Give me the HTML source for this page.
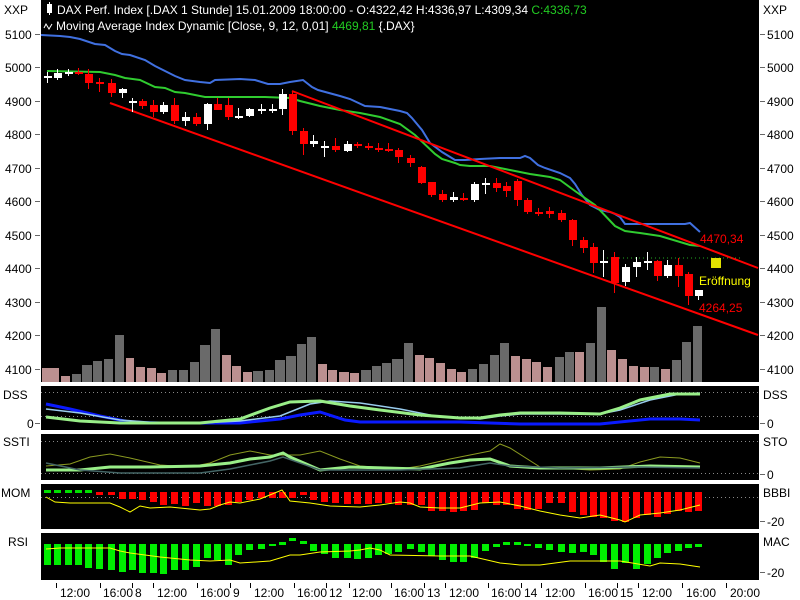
<!DOCTYPE html>
<html><head><meta charset="utf-8"><style>
html,body{margin:0;padding:0;background:#fff;width:800px;height:600px;overflow:hidden}
svg{display:block;font-family:"Liberation Sans",sans-serif}
</style></head><body>
<svg id="s" width="800" height="600" xmlns="http://www.w3.org/2000/svg">
<rect x="0" y="0" width="800" height="600" fill="#fff"/>
<rect x="41" y="0" width="718" height="382" fill="#000"/>
<rect x="41" y="386" width="718" height="44" fill="#000"/>
<rect x="41" y="434" width="718" height="46" fill="#000"/>
<rect x="41" y="484" width="718" height="45" fill="#000"/>
<rect x="41" y="533" width="718" height="47" fill="#000"/>
<g id="vol"></g>
<g id="lines"></g>
<g id="cand"></g>
<g id="ind"></g>
<rect x="47" y="4" width="5" height="9" fill="#fff"/><line x1="49.5" y1="2" x2="49.5" y2="15" stroke="#fff"/>
<text x="57" y="14" font-size="12" fill="#fff">DAX Perf. Index [.DAX  1 Stunde] 15.01.2009 18:00:00 - O:4322,42 H:4336,97 L:4309,34 <tspan fill="#22cc22">C:4336,73</tspan></text>
<path d="M44 28 L46 24 L49 29 L52 24" stroke="#fff" fill="none"/>
<text x="56" y="30" font-size="12" fill="#fff">Moving Average Index Dynamic [Close, 9, 12, 0,01] <tspan fill="#22cc22">4469,81</tspan> {.DAX}</text>
<text x="700" y="243" font-size="12" fill="#f00">4470,34</text>
<text x="699" y="285" font-size="12" fill="#ff0">Eröffnung</text>
<text x="699" y="312" font-size="12" fill="#f00">4264,25</text>
<rect x="711" y="258" width="10" height="10" fill="#e0e000"/>
<g font-size="12" fill="#000">
<text x="4" y="14">XXP</text><text x="763" y="14">XXP</text>
<text x="5" y="39">5100</text><text x="5" y="72">5000</text><text x="5" y="106">4900</text><text x="5" y="139">4800</text><text x="5" y="173">4700</text><text x="5" y="206">4600</text><text x="5" y="240">4500</text><text x="5" y="273">4400</text><text x="5" y="307">4300</text><text x="5" y="340">4200</text><text x="5" y="374">4100</text>
<text x="767" y="39">5100</text><text x="767" y="72">5000</text><text x="767" y="106">4900</text><text x="767" y="139">4800</text><text x="767" y="173">4700</text><text x="767" y="206">4600</text><text x="767" y="240">4500</text><text x="767" y="273">4400</text><text x="767" y="307">4300</text><text x="767" y="340">4200</text><text x="767" y="374">4100</text>
<text x="3" y="399">DSS</text><text x="763" y="399">DSS</text>
<text x="27" y="428">0</text><text x="767" y="428">0</text>
<text x="3" y="446">SSTI</text><text x="763" y="446">STO</text>
<text x="767" y="479">0</text>
<text x="1" y="497">MOM</text><text x="763" y="497">BBBI</text>
<text x="767" y="526">-20</text>
<text x="8" y="546">RSI</text><text x="763" y="546">MAC</text>
<text x="767" y="577">-20</text>
</g>
<g stroke="#666">
<path d="M35 34.5h5M35 67.5h5M35 101.5h5M35 134.5h5M35 168.5h5M35 201.5h5M35 235.5h5M35 268.5h5M35 302.5h5M35 335.5h5M35 369.5h5M35 423.5h5"/>
<path d="M760 34.5h5M760 67.5h5M760 101.5h5M760 134.5h5M760 168.5h5M760 201.5h5M760 235.5h5M760 268.5h5M760 302.5h5M760 335.5h5M760 369.5h5M760 423.5h5M760 474.5h5M760 521.5h5M760 572.5h5"/>
</g>
<g font-size="12" fill="#000">
<text x="60" y="597">12:00</text><text x="103" y="597">16:00</text><text x="135" y="597">8</text>
<text x="157" y="597">12:00</text><text x="200" y="597">16:00</text><text x="233" y="597">9</text>
<text x="254" y="597">12:00</text><text x="297" y="597">16:00</text><text x="329" y="597">12</text>
<text x="352" y="597">12:00</text><text x="394" y="597">16:00</text><text x="427" y="597">13</text>
<text x="449" y="597">12:00</text><text x="491" y="597">16:00</text><text x="524" y="597">14</text>
<text x="545" y="597">12:00</text><text x="588" y="597">16:00</text><text x="620" y="597">15</text>
<text x="642" y="597">12:00</text><text x="686" y="597">16:00</text><text x="730" y="597">20:00</text>
</g>
<path stroke="#000" d="M56.5 583v5M100.5 583v5M132.5 583v5M153.5 583v5M197.5 583v5M230.5 583v5M250.5 583v5M294.5 583v5M326.5 583v5M349.5 583v5M391.5 583v5M424.5 583v5M445.5 583v5M488.5 583v5M521.5 583v5M541.5 583v5M585.5 583v5M617.5 583v5M638.5 583v5M682.5 583v5M726.5 583v5"/>
</svg>
<script>
var NS="http://www.w3.org/2000/svg";
function el(p,t,a){var e=document.createElementNS(NS,t);for(var k in a)e.setAttribute(k,a[k]);document.getElementById(p).appendChild(e);return e;}
var P="#bb9090",G="#6a6a6a";
var vol=[[42,60,368,P],[61,71,376,P],[72,82,374,G],[82,93,365,G],[93,103,361,G],[104,114,359,G],[115,125,335,G],[126,135,358,P],[136,146,367,P],[147,157,368,P],[157,167,373,P],[168,178,370,G],[179,189,370,G],[190,200,362,G],[200,211,345,G],[211,221,329,G],[222,232,355,P],[232,242,366,P],[243,253,372,P],[253,264,371,G],[265,275,370,G],[275,286,360,G],[286,297,356,G],[297,307,344,G],[307,317,337,G],[318,328,364,P],[328,338,370,P],[339,350,372,P],[350,360,373,P],[361,372,370,G],[372,382,366,G],[382,392,363,G],[392,404,359,G],[404,414,343,G],[415,425,355,P],[425,435,358,P],[436,446,363,P],[447,457,369,P],[457,467,372,P],[468,478,369,G],[479,489,364,G],[490,500,355,G],[500,510,343,G],[511,521,356,P],[522,532,359,P],[532,542,362,P],[543,553,367,P],[555,565,357,G],[565,575,352,G],[575,585,352,P],[586,596,343,G],[597,607,307,G],[607,617,350,P],[618,628,359,P],[629,639,366,P],[640,650,367,P],[650,660,367,G],[661,671,369,P],[672,682,360,G],[682,692,342,G],[693,703,326,G]];
vol.forEach(function(v){el("vol","rect",{x:v[0],y:v[2],width:v[1]-v[0]-1,height:382-v[2],fill:v[3]});});
function pl(p,pts,c,w,extra){var a={points:pts,fill:"none",stroke:c,"stroke-width":w};for(var k in extra)a[k]=extra[k];return el(p,"polyline",a);}
pl("lines","41,35 60,36 70,37 80,39 95,44 105,45 115,51 122,54 130,55 145,60 155,66 165,71 175,76 185,80 200,82 210,83 215,80 240,79 255,80 268,84 280,84 290,82 303,80 312,87 318,90 340,96 350,99 365,106 380,107 400,111 407,113 412,118 422,130 430,143 442,152 455,160 465,160 480,159 500,158 520,158 525,156 530,158 538,165 545,168 560,173 570,178 575,184 582,195 590,205 600,210 610,212 615,214 620,217 625,224 640,224 685,224 690,223 700,232","#4070e0",2);
pl("lines","47,71 100,72 115,75 125,78 140,80 155,87 165,88 175,92 185,93 205,97 265,97 290,98 300,101 320,106 340,110 360,113 380,117 400,124 415,135 435,154 442,159 455,163 460,165 470,166 490,166 510,170 530,174 550,177 560,180 575,191 595,205 615,226 625,231 640,233 660,236 690,245 700,246","#30cc30",2);
pl("lines","292,91 758,268","#f00",2);
pl("lines","110,103 758,335","#f00",2);
pl("lines","603,258 740,258","#22aa22",1,{"stroke-dasharray":"1,3"});
var c=[[47,72,83,76,78,0],[57,69,80,73,78,0],[68,69,76,72,74,0],[78,68,75,72,74,1],[88,69,89,74,83,1],[99,78,92,82,84,1],[111,79,97,83,93,1],[122,88,98,89,93,0],[132,98,112,101,103,0],[142,99,109,101,106,1],[153,100,117,105,112,1],[163,102,114,105,112,0],[174,98,124,105,121,1],[185,112,126,117,121,0],[196,113,126,117,124,1],[207,103,130,104,124,0],[217,98,110,104,110,1],[228,98,120,105,117,1],[238,108,119,116,117,0],[249,108,117,109,116,0],[261,104,114,109,110,0],[272,104,113,109,110,0],[282,89,115,94,109,0],[292,91,135,94,131,1],[303,128,155,131,144,1],[313,135,147,141,144,0],[324,141,157,146,147,0],[335,138,152,146,150,1],[347,141,152,144,151,0],[357,142,148,144,146,1],[368,143,150,146,148,1],[378,143,152,148,149,1],[388,143,152,149,151,1],[398,148,163,150,157,1],[410,155,167,158,163,1],[421,166,184,167,183,1],[431,182,197,182,195,1],[442,190,202,194,200,1],[453,192,202,197,200,0],[463,193,201,198,200,1],[474,182,202,184,200,0],[485,178,194,183,184,0],[496,178,192,183,188,1],[506,182,197,186,191,1],[517,179,206,181,200,1],[527,198,214,200,212,1],[538,208,216,212,213,1],[549,207,218,211,214,1],[561,210,222,213,220,1],[572,219,246,220,240,1],[583,237,253,240,248,1],[593,243,273,247,263,1],[603,250,277,261,263,0],[614,252,293,257,283,1],[625,264,286,267,282,0],[636,257,277,262,267,0],[647,252,270,261,263,0],[657,260,281,261,276,1],[667,260,278,265,276,0],[678,258,287,265,276,1],[688,272,305,274,296,1],[698,290,300,290,296,0]];
c.forEach(function(k){var col=k[5]?"#f00":"#fff";el("cand","line",{x1:k[0]+.5,y1:k[1],x2:k[0]+.5,y2:k[2],stroke:col});el("cand","rect",{x:k[0]-3,y:k[3],width:8,height:Math.max(2,k[4]-k[3]),fill:col});});
[392,416,441,473,497].forEach(function(y){pl("ind","41,"+(y+.5)+" 758,"+(y+.5),"#888",1,{"stroke-dasharray":"1,3"});});
pl("ind","46,404 70,409 100,416 130,422 160,423 200,423 240,423 280,419 300,415 320,412 345,420 360,422 420,422 460,422 520,424 560,424 600,424 650,419 680,419 700,420","#0a1aff",3);
pl("ind","46,409 80,413 120,420 160,423 200,423 240,421 280,416 310,404 330,401 360,403 400,409 440,417 480,419 500,416 520,414 580,414 600,414 620,410 650,400 680,394 700,393","#99ccee",1.5);
pl("ind","46,417 80,421 120,423 160,423 200,423 240,419 270,408 290,402 320,401 350,406 380,410 420,415 460,418 480,418 500,415 520,413 560,413 600,414 620,408 640,400 670,394 700,394","#99ee88",3);
pl("ind","46,466 70,464 90,457 110,454 130,458 160,465 190,467 210,463 230,455 250,451 270,455 300,455 320,451 340,459 360,466 400,469 420,466 450,459 470,455 490,451 500,444 510,448 540,467 590,470 620,469 640,462 660,457 680,458 700,463","#8a9a20",1);
pl("ind","46,470 80,470 110,467 150,467 200,466 230,463 250,459 270,457 283,453 290,457 320,470 350,467 420,469 450,463 470,460 490,459 510,466 540,468 600,468 650,466 700,467","#99ee88",3);
pl("ind","46,463 80,470 120,473 200,473 230,469 270,461 283,457 320,470 400,470 460,468 490,463 510,466 560,468 640,467 700,468","#446666",1.5);
var momB=[0,0,0,0,0,495,495,499,499,500,502,505,504,506,503,506,506,505,502,500,498,498,498,498,495,500,502,503,504,504,504,503,503,505,505,505,511,511,512,511,510,503,505,505,509,510,509,503,503,512,515,517,518,521,522,518,515,517,514,511,512,511,513,514];
c.forEach(function(k,i){var b=momB[i]||0;if(i<5){el("ind","rect",{x:k[0]-3,y:490,width:7,height:3,fill:"#00e000"});}else if(b){el("ind","rect",{x:k[0]-3,y:492,width:7,height:b-492,fill:"#f00"});}});
pl("ind","46,497 55,502 70,503 110,503 120,507 130,512 140,506 150,508 170,507 190,509 200,510 210,509 220,505 230,502 240,503 260,499 282,490 290,501 310,503 330,506 360,507 380,505 400,502 410,503 420,507 440,508 460,508 480,503 500,502 520,506 540,511 560,515 580,518 600,515 620,520 625,522 640,515 660,513 680,510 700,505","#ffff00",1);
var rsiB=[565,565,565,565,568,569,570,572,570,573,573,574,570,570,567,558,560,565,555,550,549,546,545,541,544,551,554,558,558,559,558,555,554,552,549,552,556,560,562,562,558,551,547,545,545,546,548,550,552,553,552,555,562,569,563,569,564,558,553,551,548,547,548,548];
c.forEach(function(k,i){var b=rsiB[i];var t=544;if(b<546){t=b-3;}el("ind","rect",{x:k[0]-3,y:t,width:7,height:Math.max(2,b-t),fill:"#00ee00"});});
pl("ind","46,549 60,548 110,548 120,551 130,553 160,557 190,560 210,561 230,560 240,563 270,561 290,555 300,555 320,552 350,551 360,550 370,548 380,550 390,555 440,556 470,556 500,563 520,565 540,565 570,561 620,561 650,566 660,563 680,564 700,567","#ffff00",1);
</script>
</body></html>
